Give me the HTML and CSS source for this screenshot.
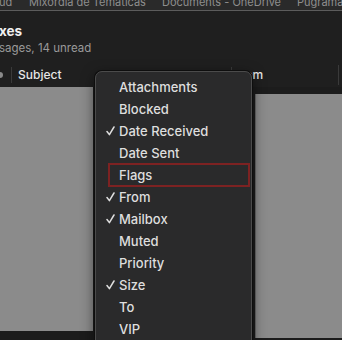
FILE: index.html
```html
<!DOCTYPE html>
<html>
<head>
<meta charset="utf-8">
<link rel="stylesheet" href="styles.css">
</head>
<body>
<div class="window">
  <div class="tabs">
    <span class="tab t1">ud</span>
    <span class="tab t2">Mixórdia de Temáticas</span>
    <span class="tab t3">Documents - OneDrive</span>
    <span class="tab t4">Pugramá</span>
  </div>
  <div class="heading">
    <div class="title">xes</div>
    <div class="subtitle">sages, 14 unread</div>
  </div>
  <div class="colhead">
    <span class="chev"></span>
    <span class="sep"></span>
    <span class="col subject">Subject</span>
    <span class="sep sep2"></span>
    <span class="col from">From</span>
    <span class="sep sep3"></span>
  </div>
  <div class="content">
    <div class="pane left"></div>
    <div class="gap"></div>
    <div class="pane right"></div>
  </div>
</div>
<div class="menu">
  <div class="item">Attachments</div>
  <div class="item">Blocked</div>
  <div class="item checked"><svg class="check" width="9" height="10" viewBox="0 0 9 10"><path d="M1 5.5 L3.4 8.6 L8 1" fill="none" stroke="#dedede" stroke-width="1.5" stroke-linecap="round" stroke-linejoin="round"/></svg>Date Received</div>
  <div class="item">Date Sent</div>
  <div class="item flagged">Flags</div>
  <div class="item checked"><svg class="check" width="9" height="10" viewBox="0 0 9 10"><path d="M1 5.5 L3.4 8.6 L8 1" fill="none" stroke="#dedede" stroke-width="1.5" stroke-linecap="round" stroke-linejoin="round"/></svg>From</div>
  <div class="item checked"><svg class="check" width="9" height="10" viewBox="0 0 9 10"><path d="M1 5.5 L3.4 8.6 L8 1" fill="none" stroke="#dedede" stroke-width="1.5" stroke-linecap="round" stroke-linejoin="round"/></svg>Mailbox</div>
  <div class="item">Muted</div>
  <div class="item">Priority</div>
  <div class="item checked"><svg class="check" width="9" height="10" viewBox="0 0 9 10"><path d="M1 5.5 L3.4 8.6 L8 1" fill="none" stroke="#dedede" stroke-width="1.5" stroke-linecap="round" stroke-linejoin="round"/></svg>Size</div>
  <div class="item">To</div>
  <div class="item">VIP</div>
</div>
</body>
</html>
```
FILE: styles.css
```css
html, body {
  margin: 0;
  padding: 0;
}
body {
  width: 342px;
  height: 340px;
  overflow: hidden;
  background: #1c1c1c;
  font-family: Inter, "Noto Sans", sans-serif;
  position: relative;
}
.window {
  display: flex;
  flex-direction: column;
}
.tabs {
  height: 10px;
  background: #2a2a2a;
  border-bottom: 1px solid #5c5c5c;
  display: flex;
  overflow: hidden;
  white-space: nowrap;
}
.tab {
  font-size: 11px;
  line-height: 12px;
  color: #8e8e8e;
  margin-top: -4px;
  flex: none;
  overflow: hidden;
}
.t1 { margin-left: -1px; width: 30px; }
.t2 { width: 133px; }
.t3 { width: 135px; }
.heading {
  background: #1f1f1f;
  height: 51px;
}
.title {
  font-size: 13.5px;
  font-weight: 700;
  color: #f0f0f0;
  margin-top: 12px;
  line-height: 16px;
  margin-left: -1px;
}
.subtitle {
  font-size: 11.5px;
  color: #9a9a9a;
  line-height: 14px;
  margin-top: 2px;
  margin-left: -1px;
}
.colhead {
  background: #1f1f1f;
  height: 25px;
  display: flex;
  align-items: center;
}
.chev {
  width: 3px;
  height: 6px;
  background: #8a8a8a;
  border-radius: 0 3px 3px 0;
  margin-right: 8px;
  flex: none;
}
.sep {
  width: 1px;
  height: 16px;
  background: #3a3a3a;
  flex: none;
}
.col {
  font-size: 12px;
  font-weight: 500;
  color: #e6e6e6;
  flex: none;
}
.subject {
  margin-left: 6px;
  width: 213px;
}
.from {
  margin-left: 2px;
  width: 104px;
}
.sep3 { height: 20px; }
.content {
  display: flex;
  align-items: flex-start;
  background: #1c1c1c;
  height: 253px;
}
.pane {
  background: #8b8b8b;
}
.left {
  width: 93px;
  height: 244px;
}
.gap {
  width: 162px;
}
.right {
  flex: 1;
  height: 244px;
  margin-top: 7px;
  border-left: 1px solid #6a6a6a;
}
.menu {
  position: absolute;
  left: 95px;
  top: 71px;
  width: 157px;
  height: 290px;
  background: #2a2a2b;
  border: 1px solid #4b4b4b;
  border-radius: 7px;
  box-shadow: 0 0 0 1px #0e0e0e, 0 4px 14px rgba(0,0,0,0.6);
  padding-top: 4px;
  box-sizing: border-box;
}
.item {
  height: 22px;
  line-height: 22px;
  font-size: 13px;
  font-weight: 500;
  color: #dedede;
  padding-left: 23px;
  position: relative;
  box-sizing: border-box;
}
.check {
  position: absolute;
  left: 10px;
  top: 6px;
}
.flagged {
  margin-left: 12px;
  margin-right: 1px;
  padding-left: 9px;
  border: 2px solid #7d2222;
  line-height: 20px;
  height: 24px;
  margin-top: -1px;
  margin-bottom: -1px;
}
```
